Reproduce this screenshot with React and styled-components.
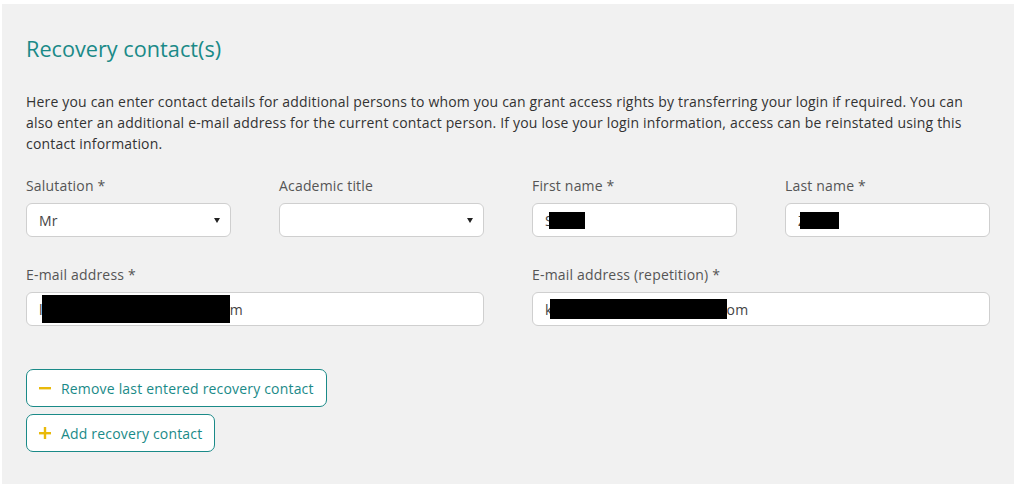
import React from "react";
import styled, { createGlobalStyle } from "styled-components";

const Global = createGlobalStyle`
  html, body { margin: 0; padding: 0; background: #fff; }
  body { font-family: "Open Sans", "Noto Sans", Arial, sans-serif; letter-spacing: 0.18px; }
  * { box-sizing: border-box; }
`;

const Page = styled.div`
  padding: 4px 3px 5px 2px;
`;

const Panel = styled.section`
  background: #f1f1f1;
  height: 480px;
  padding: 30px 24px 0 24px;
`;

const Title = styled.h2`
  margin: 0;
  font-weight: 400;
  font-size: 21.7px;
  letter-spacing: 0;
  line-height: 30px;
  color: #1a8a88;
`;

const Intro = styled.p`
  margin: 27px 0 0 0;
  font-size: 14px;
  line-height: 21px;
  color: #333;
`;

const Grid = styled.div`
  display: grid;
  grid-template-columns: repeat(${(p) => p.$cols}, 1fr);
  column-gap: 48px;
  margin-top: ${(p) => p.$top}px;
`;

const FieldGroup = styled.div`
  display: flex;
  flex-direction: column;
`;

const Label = styled.label`
  font-size: 14px;
  line-height: 20px;
  color: #555;
  margin-bottom: 7px;
`;

const Box = styled.div`
  position: relative;
  height: 34px;
  background: #fff;
  border: 1px solid #cfcfcf;
  border-radius: 6px;
  padding: 0 12px;
  display: flex;
  align-items: center;
  font-size: 14px;
  color: #444;
  white-space: nowrap;
`;

const Caret = styled.span`
  position: absolute;
  right: 10px;
  top: 14px;
  width: 0;
  height: 0;
  border-left: 3.5px solid transparent;
  border-right: 3.5px solid transparent;
  border-top: 5px solid #222;
`;

const Redact = styled.span`
  display: inline-block;
  background: #000;
  width: ${(p) => p.$w}px;
  height: ${(p) => p.$h}px;
  margin-left: ${(p) => p.$ml || 0}px;
  vertical-align: middle;
`;

const Actions = styled.div`
  display: flex;
  flex-direction: column;
  align-items: flex-start;
  gap: 7px;
  margin-top: 43px;
`;

const Button = styled.button`
  display: inline-flex;
  align-items: center;
  gap: 9px;
  height: 38px;
  padding: 0 12px 0 11px;
  background: #fff;
  border: 1px solid #1a8a88;
  border-radius: 7px;
  font-family: inherit;
  letter-spacing: inherit;
  font-size: 14px;
  color: #1a8a88;
  cursor: pointer;
`;

const Icon = styled.svg`
  width: 14px;
  height: 14px;
  flex: none;
`;

const MinusIcon = () => (
  <Icon viewBox="0 0 14 14">
    <rect x="1" y="6" width="12" height="2.4" fill="#e9b90a" />
  </Icon>
);

const PlusIcon = () => (
  <Icon viewBox="0 0 14 14">
    <rect x="1" y="6" width="12" height="2.4" fill="#e9b90a" />
    <rect x="5.8" y="1" width="2.4" height="12" fill="#e9b90a" />
  </Icon>
);

export default function App() {
  return (
    <>
      <Global />
      <Page>
        <Panel>
          <Title>Recovery contact(s)</Title>
          <Intro>
            Here you can enter contact details for additional persons to whom you can grant access rights by
            transferring your login if required. You can also enter an additional e-mail address for the current
            contact person. If you lose your login information, access can be reinstated using this contact
            information.
          </Intro>
          <Grid $cols={4} $top={22}>
            <FieldGroup>
              <Label>Salutation *</Label>
              <Box>
                Mr
                <Caret />
              </Box>
            </FieldGroup>
            <FieldGroup>
              <Label>Academic title</Label>
              <Box>
                <Caret />
              </Box>
            </FieldGroup>
            <FieldGroup>
              <Label>First name *</Label>
              <Box>
                S<Redact $w={36} $h={17} $ml={-4} />
              </Box>
            </FieldGroup>
            <FieldGroup>
              <Label>Last name *</Label>
              <Box>
                Z<Redact $w={39} $h={17} $ml={-6} />
              </Box>
            </FieldGroup>
          </Grid>
          <Grid $cols={2} $top={28}>
            <FieldGroup>
              <Label>E-mail address *</Label>
              <Box>
                l<Redact $w={188} $h={28} $ml={-1} />m
              </Box>
            </FieldGroup>
            <FieldGroup>
              <Label>E-mail address (repetition) *</Label>
              <Box>
                k<Redact $w={177} $h={20} $ml={-3} />om
              </Box>
            </FieldGroup>
          </Grid>
          <Actions>
            <Button>
              <MinusIcon />
              Remove last entered recovery contact
            </Button>
            <Button>
              <PlusIcon />
              Add recovery contact
            </Button>
          </Actions>
        </Panel>
      </Page>
    </>
  );
}
